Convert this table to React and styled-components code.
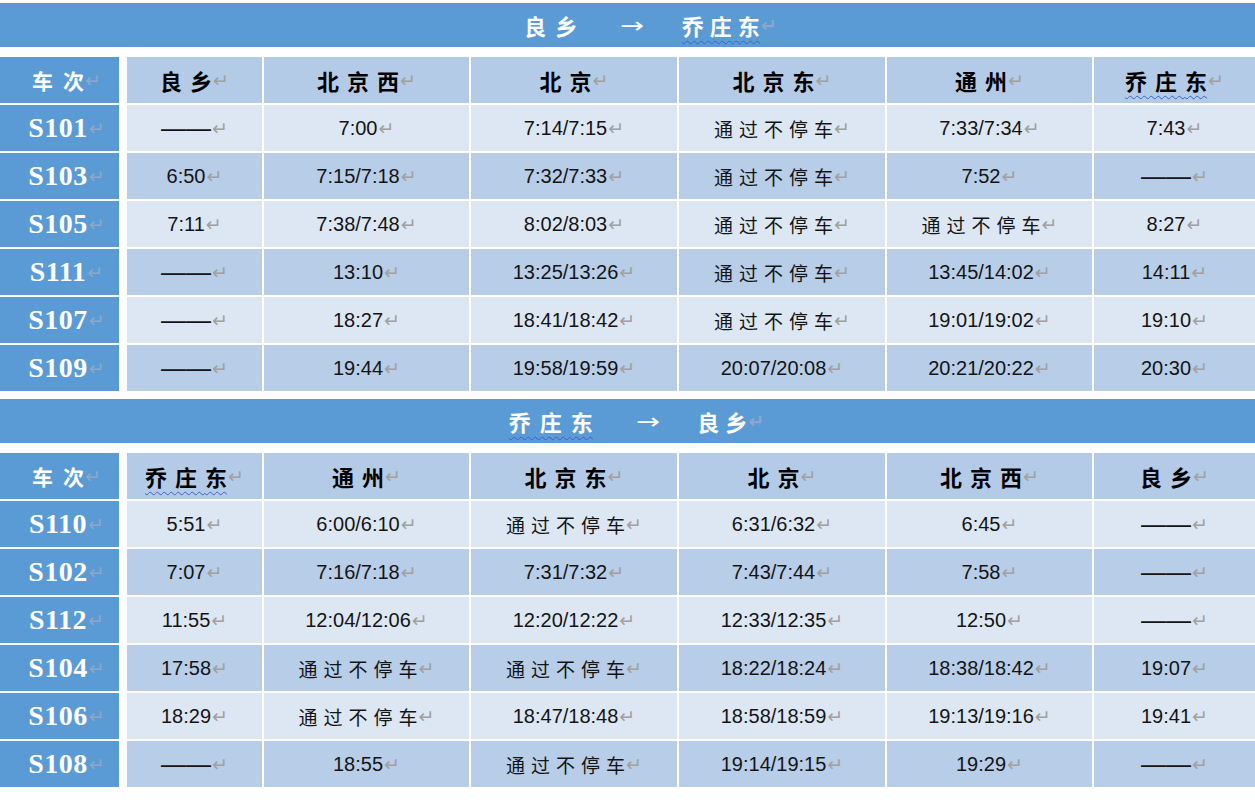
import React from "react";
import styled, { createGlobalStyle } from "styled-components";

const Global = createGlobalStyle`
  html, body { margin: 0; padding: 0; background: #ffffff; }
  body { font-family: "Liberation Sans", "Noto Sans CJK SC", sans-serif; }
`;

const Page = styled.div`
  width: 1255px;
  padding-top: 3px;
  overflow: hidden;
`;

const Section = styled.section`
  margin-top: ${(p) => p.$top}px;
`;

const TitleBar = styled.div`
  height: 44px;
  background: #5b9bd5;
  display: flex;
  align-items: center;
  justify-content: center;
  padding-left: ${(p) => p.$shift}px;
  color: #ffffff;
  font-family: "Noto Sans CJK SC", sans-serif;
  font-weight: 700;
  font-size: 22px;
`;

const Spaced = styled.span`
  letter-spacing: ${(p) => p.$gap}px;
  text-decoration: ${(p) => (p.$wavy ? "underline wavy #3f5fd0" : "none")};
  text-decoration-thickness: 1px;
  text-underline-offset: 5px;
  white-space: nowrap;
`;

const LastChar = styled.span`
  letter-spacing: 0;
`;

const Arrow = styled.span`
  display: inline-block;
  font-family: "DejaVu Sans", sans-serif;
  font-weight: 400;
  font-size: 22px;
  margin: 0 40px 0 46px;
  transform: scaleX(1.3);
`;

const Grid = styled.div`
  margin-top: 10px;
  display: grid;
  grid-template-columns: 125px 135px 205px 206px 206px 205px 161px;
  grid-auto-rows: 46px;
  column-gap: 2px;
  row-gap: 2px;
`;

const LabelCell = styled.div`
  margin-right: 6px;
  background: #5b9bd5;
  color: #ffffff;
  display: flex;
  align-items: center;
  justify-content: center;
  padding-left: 14px;
`;

const TrainNo = styled.span`
  font-family: "Liberation Serif", serif;
  font-weight: 700;
  font-size: 28px;
  letter-spacing: 0.5px;
`;

const LabelHead = styled(Spaced)`
  font-family: "Noto Sans CJK SC", sans-serif;
  font-weight: 700;
  font-size: 21px;
`;

const Cell = styled.div`
  background: ${(p) => p.$bg};
  display: flex;
  align-items: center;
  justify-content: center;
  color: #141414;
`;

const HeadText = styled(Spaced)`
  font-family: "Noto Sans CJK SC", sans-serif;
  font-weight: 700;
  font-size: 22px;
  color: #000000;
`;

const Time = styled.span`
  font-family: "Liberation Sans", sans-serif;
  font-size: 20px;
`;

const Pass = styled(Spaced)`
  font-family: "Noto Sans CJK SC", sans-serif;
  font-size: 19px;
`;

const Dash = styled.span`
  font-family: "Liberation Sans", sans-serif;
  font-size: 25px;
  line-height: 1;
`;

const Mark = styled.span`
  font-family: "DejaVu Sans", sans-serif;
  font-size: 19px;
  line-height: 1;
  color: ${(p) => (p.$faint ? "rgba(150,170,200,0.85)" : "#a0a0a0")};
  margin-left: 1px;
`;

const COLORS = { head: "#b4cbe7", light: "#dde7f3", mid: "#b7cde8" };

const PASS = "通过不停车";
const DASH = "——";

const tables = [
  {
    from: "良乡",
    to: "乔庄东",
    shift: 46,
    top: 0,
    heads: ["良乡", "北京西", "北京", "北京东", "通州", "乔庄东"],
    rows: [
      ["S101", DASH, "7:00", "7:14/7:15", PASS, "7:33/7:34", "7:43"],
      ["S103", "6:50", "7:15/7:18", "7:32/7:33", PASS, "7:52", DASH],
      ["S105", "7:11", "7:38/7:48", "8:02/8:03", PASS, PASS, "8:27"],
      ["S111", DASH, "13:10", "13:25/13:26", PASS, "13:45/14:02", "14:11"],
      ["S107", DASH, "18:27", "18:41/18:42", PASS, "19:01/19:02", "19:10"],
      ["S109", DASH, "19:44", "19:58/19:59", "20:07/20:08", "20:21/20:22", "20:30"],
    ],
  },
  {
    from: "乔庄东",
    to: "良乡",
    shift: 18,
    top: 8,
    heads: ["乔庄东", "通州", "北京东", "北京", "北京西", "良乡"],
    rows: [
      ["S110", "5:51", "6:00/6:10", PASS, "6:31/6:32", "6:45", DASH],
      ["S102", "7:07", "7:16/7:18", "7:31/7:32", "7:43/7:44", "7:58", DASH],
      ["S112", "11:55", "12:04/12:06", "12:20/12:22", "12:33/12:35", "12:50", DASH],
      ["S104", "17:58", PASS, PASS, "18:22/18:24", "18:38/18:42", "19:07"],
      ["S106", "18:29", PASS, "18:47/18:48", "18:58/18:59", "19:13/19:16", "19:41"],
      ["S108", DASH, "18:55", PASS, "19:14/19:15", "19:29", DASH],
    ],
  },
];

function Chars({ text }) {
  return (
    <>
      {text.slice(0, -1)}
      <LastChar>{text.slice(-1)}</LastChar>
    </>
  );
}

function Value({ v }) {
  if (v === PASS)
    return (
      <Pass $gap={6}>
        <Chars text={v} />
      </Pass>
    );
  if (v === DASH) return <Dash>{v}</Dash>;
  return <Time>{v}</Time>;
}

function Timetable({ t }) {
  return (
    <Section $top={t.top}>
      <TitleBar $shift={t.shift}>
        <Spaced $gap={9} $wavy={t.from === "乔庄东"}>
          <Chars text={t.from} />
        </Spaced>
        <Arrow>→</Arrow>
        <Spaced $gap={6} $wavy={t.to === "乔庄东"}>
          <Chars text={t.to} />
        </Spaced>
        <Mark $faint>↵</Mark>
      </TitleBar>
      <Grid>
        <LabelCell>
          <LabelHead $gap={10}>
            <Chars text="车次" />
          </LabelHead>
          <Mark $faint>↵</Mark>
        </LabelCell>
        {t.heads.map((h, i) => (
          <Cell key={i} $bg={COLORS.head}>
            <HeadText $gap={8} $wavy={h === "乔庄东"}>
              <Chars text={h} />
            </HeadText>
            <Mark>↵</Mark>
          </Cell>
        ))}
        {t.rows.map((r, ri) => (
          <React.Fragment key={r[0]}>
            <LabelCell>
              <TrainNo>{r[0]}</TrainNo>
              <Mark $faint>↵</Mark>
            </LabelCell>
            {r.slice(1).map((v, ci) => (
              <Cell key={ci} $bg={ri % 2 === 0 ? COLORS.light : COLORS.mid}>
                <Value v={v} />
                <Mark>↵</Mark>
              </Cell>
            ))}
          </React.Fragment>
        ))}
      </Grid>
    </Section>
  );
}

export default function App() {
  return (
    <>
      <Global />
      <Page>
        {tables.map((t, i) => (
          <Timetable key={i} t={t} />
        ))}
      </Page>
    </>
  );
}
